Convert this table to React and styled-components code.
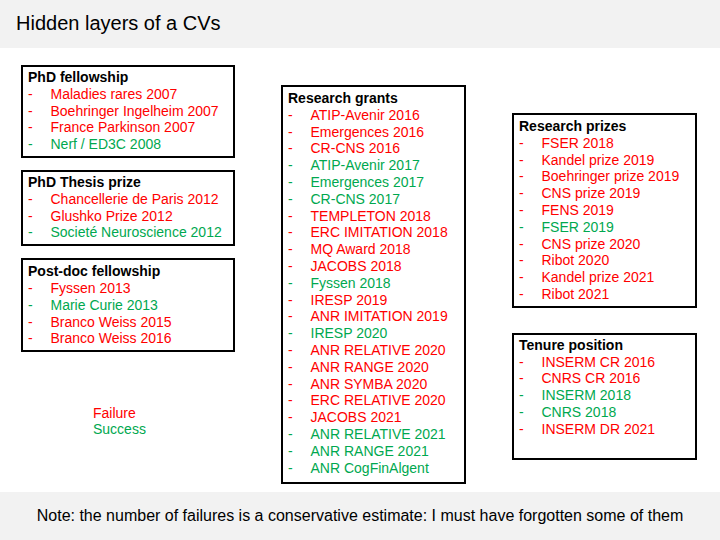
import React from "react";
import styled, { createGlobalStyle } from "styled-components";

const GlobalStyle = createGlobalStyle`
  html, body { margin: 0; padding: 0; background: #fff; }
  body { font-family: "Liberation Sans", Arial, sans-serif; color: #000; }
`;

const RED = "#ff0000";
const GREEN = "#00a84f";

const Page = styled.div`
  width: 720px;
  height: 540px;
  display: flex;
  flex-direction: column;
  overflow: hidden;
`;

const Header = styled.header`
  height: 48px;
  flex: none;
  background: #f2f2f2;
  display: flex;
  align-items: center;
  padding-left: 16px;
  padding-bottom: 2px;
  box-sizing: border-box;
  font-size: 20px;
`;

const Main = styled.main`
  flex: 1;
  display: grid;
  grid-template-columns: 214px 185px 185px;
  column-gap: 46px;
  padding-left: 21px;
  align-items: start;
`;

const Column = styled.div`
  display: flex;
  flex-direction: column;
  padding-top: ${(p) => p.$top}px;
  gap: ${(p) => p.$gap || 0}px;
`;

const Box = styled.section`
  border: 2px solid #000;
  padding: ${(p) => p.$pt ?? 2}px 6px ${(p) => p.$pb ?? 3}px 5px;
  height: ${(p) => (p.$height ? `${p.$height}px` : "auto")};
  box-sizing: border-box;
  font-size: 14px;
  line-height: 16.8px;
`;

const BoxTitle = styled.div`
  font-weight: bold;
`;

const List = styled.ul`
  list-style: none;
  margin: 0;
  padding: 0;
`;

const Item = styled.li`
  display: grid;
  grid-template-columns: 22.5px 1fr;
  color: ${(p) => (p.$ok ? GREEN : RED)};
  white-space: nowrap;
`;

const Legend = styled.div`
  margin-top: 41px;
  padding-left: 72px;
  font-size: 14px;
  line-height: 16px;
`;

const LegendLine = styled.div`
  color: ${(p) => (p.$ok ? GREEN : RED)};
`;

const Footer = styled.footer`
  height: 48px;
  flex: none;
  background: #f2f2f2;
  display: flex;
  align-items: center;
  justify-content: center;
  font-size: 16px;
`;

const Card = ({ title, items, ...rest }) => (
  <Box {...rest}>
    <BoxTitle>{title}</BoxTitle>
    <List>
      {items.map(([label, ok]) => (
        <Item key={label} $ok={ok}>
          <span>-</span>
          <span>{label}</span>
        </Item>
      ))}
    </List>
  </Box>
);

const phd = [
  ["Maladies rares 2007", false],
  ["Boehringer Ingelheim 2007", false],
  ["France Parkinson 2007", false],
  ["Nerf / ED3C 2008", true],
];
const thesis = [
  ["Chancellerie de Paris 2012", false],
  ["Glushko Prize 2012", false],
  ["Societé Neuroscience 2012", true],
];
const postdoc = [
  ["Fyssen 2013", false],
  ["Marie Curie 2013", true],
  ["Branco Weiss 2015", false],
  ["Branco Weiss 2016", false],
];
const grants = [
  ["ATIP-Avenir 2016", false],
  ["Emergences 2016", false],
  ["CR-CNS 2016", false],
  ["ATIP-Avenir 2017", true],
  ["Emergences 2017", true],
  ["CR-CNS 2017", true],
  ["TEMPLETON 2018", false],
  ["ERC IMITATION 2018", false],
  ["MQ Award 2018", false],
  ["JACOBS 2018", false],
  ["Fyssen 2018", true],
  ["IRESP 2019", false],
  ["ANR IMITATION 2019", false],
  ["IRESP 2020", true],
  ["ANR RELATIVE 2020", false],
  ["ANR RANGE 2020", false],
  ["ANR SYMBA 2020", false],
  ["ERC RELATIVE 2020", false],
  ["JACOBS 2021", false],
  ["ANR RELATIVE 2021", true],
  ["ANR RANGE 2021", true],
  ["ANR CogFinAlgent", true],
];
const prizes = [
  ["FSER 2018", false],
  ["Kandel prize 2019", false],
  ["Boehringer prize 2019", false],
  ["CNS prize 2019", false],
  ["FENS 2019", false],
  ["FSER 2019", true],
  ["CNS prize 2020", false],
  ["Ribot 2020", false],
  ["Kandel prize 2021", false],
  ["Ribot 2021", false],
];
const tenure = [
  ["INSERM CR 2016", false],
  ["CNRS CR 2016", false],
  ["INSERM 2018", true],
  ["CNRS 2018", true],
  ["INSERM DR 2021", false],
];

export default function App() {
  return (
    <Page>
      <GlobalStyle />
      <Header>Hidden layers of a CVs</Header>
      <Main>
        <Column $top={17} $gap={12}>
          <Card title="PhD fellowship" items={phd} />
          <Card title="PhD Thesis prize" items={thesis} />
          <Card title="Post-doc fellowship" items={postdoc} $pt={3} />
          <Legend>
            <LegendLine>Failure</LegendLine>
            <LegendLine $ok>Success</LegendLine>
          </Legend>
        </Column>
        <Column $top={37}>
          <Card title="Research grants" items={grants} $pt={3} $pb={6} />
        </Column>
        <Column $top={65} $gap={25}>
          <Card title="Research prizes" items={prizes} $pt={3} $pb={3} />
          <Card title="Tenure position" items={tenure} $height={127} />
        </Column>
      </Main>
      <Footer>
        Note: the number of failures is a conservative estimate: I must have forgotten some of them
      </Footer>
    </Page>
  );
}
